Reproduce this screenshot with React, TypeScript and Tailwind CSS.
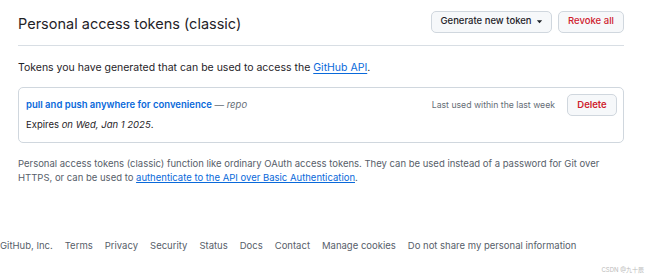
import React from "react";

export default function App() {
  const font = { fontFamily: "Inter, 'Noto Sans CJK SC', sans-serif" };
  return (
    <div className="w-[650px] h-[280px] bg-white relative overflow-hidden text-[#1f2328]" style={font}>
      <div className="pl-[18px] pr-[26px]">
        <div className="flex items-center justify-between h-[46px] border-b border-[#d8dee4]">
          <h1 className="text-[14.5px] font-normal leading-[20px] mt-[2px]">Personal access tokens (classic)</h1>
          <div className="flex gap-[6px] -mt-[2px]">
            <button className="h-[22px] w-[121px] justify-center text-[9.5px] font-medium rounded-[5px] border border-[#d0d7de] bg-[#f6f8fa] flex items-center gap-[4px]">
              Generate new token
              <svg width="7" height="7" viewBox="0 0 8 8"><path d="M1 2.5h6L4 6z" fill="#1f2328" /></svg>
            </button>
            <button className="h-[22px] w-[66px] text-[9.5px] font-medium rounded-[5px] border border-[#d0d7de] bg-[#f6f8fa] text-[#cf222e]">
              Revoke all
            </button>
          </div>
        </div>
        <p className="text-[10.5px] mt-[15px] leading-[14px]">
          Tokens you have generated that can be used to access the{" "}
          <a className="text-[#0969da] underline underline-offset-2">GitHub API</a>.
        </p>
        <div className="mt-[12px] border border-[#d0d7de] rounded-[5px] h-[56px] pl-[7px] pr-[6px] flex justify-between">
          <div className="pt-[10px]">
            <div className="text-[9.5px] leading-[14px]">
              <span className="text-[#0969da] font-semibold">pull and push anywhere for convenience</span>
              <span className="text-[#656d76]"> — <i>repo</i></span>
            </div>
            <div className="text-[9.5px] leading-[14px] mt-[6px]">
              Expires <i>on Wed, Jan 1 2025</i>.
            </div>
          </div>
          <div className="flex items-start pt-[6px] gap-[12px]">
            <span className="text-[8.7px] text-[#656d76] mt-[5px]">Last used within the last week</span>
            <button className="h-[22px] w-[50px] text-[9.5px] font-semibold rounded-[5px] border border-[#d0d7de] bg-[#f6f8fa] text-[#cf222e]">
              Delete
            </button>
          </div>
        </div>
        <p className="text-[9.5px] leading-[14px] text-[#57606a] mt-[14px] w-[585px]">
          Personal access tokens (classic) function like ordinary OAuth access tokens. They can be used instead of a password for Git over HTTPS, or can be used to{" "}
          <a className="text-[#0969da] underline underline-offset-1">authenticate to the API over Basic Authentication</a>.
        </p>
      </div>
      <div className="absolute left-0 top-[239px] flex gap-[12px] text-[9.5px] text-[#57606a] whitespace-nowrap">
        <span>GitHub, Inc.</span>
        <span>Terms</span>
        <span>Privacy</span>
        <span>Security</span>
        <span>Status</span>
        <span>Docs</span>
        <span>Contact</span>
        <span>Manage cookies</span>
        <span>Do not share my personal information</span>
      </div>
      <div className="absolute right-[6px] bottom-[6px] text-[6px] text-[#bbb]">CSDN @九十辰</div>
    </div>
  );
}
